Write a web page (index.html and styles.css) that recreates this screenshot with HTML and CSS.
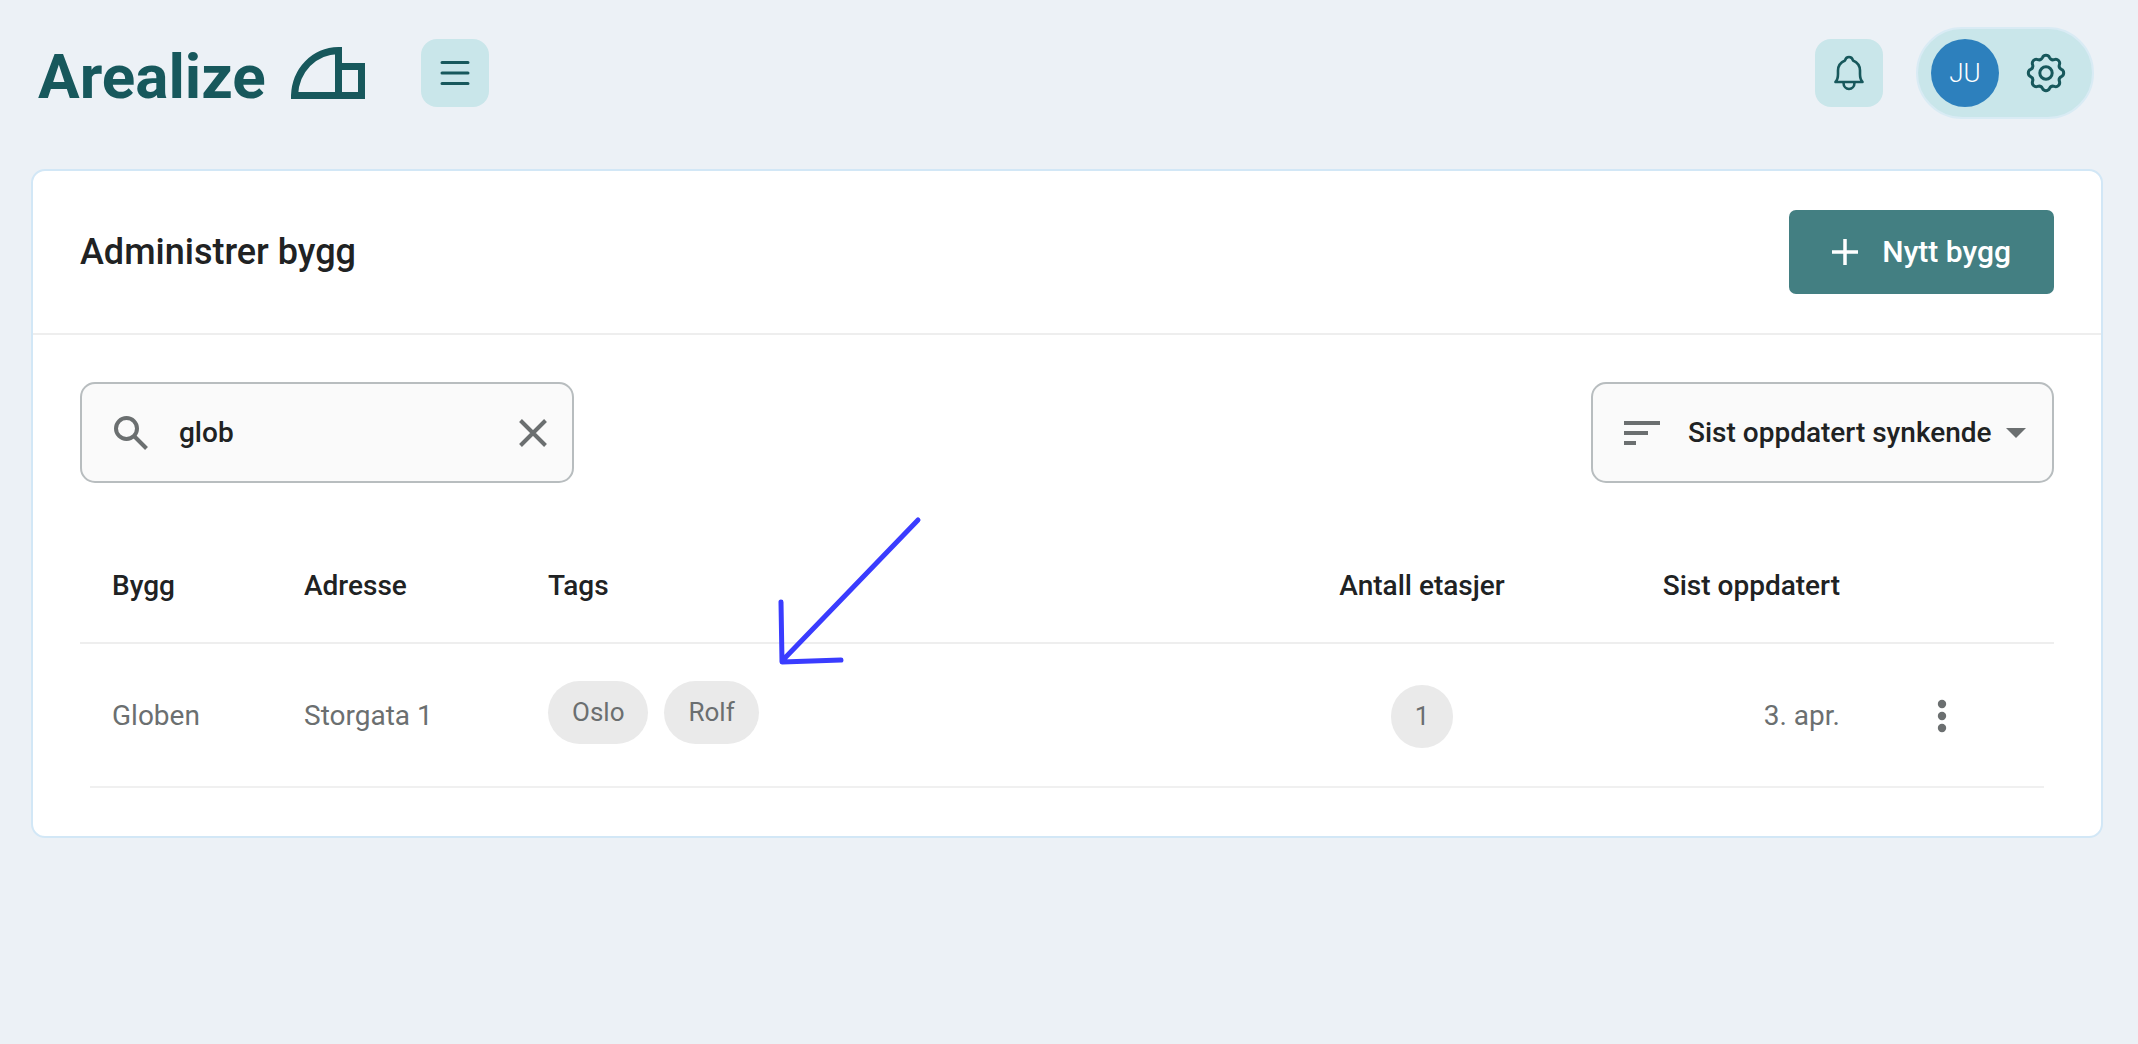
FILE: index.html
```html
<!DOCTYPE html>
<html lang="no">
<head>
  <meta charset="utf-8">
  <meta name="viewport" content="width=device-width, initial-scale=1">
  <title>Administrer bygg – Arealize</title>
  <link rel="stylesheet" href="styles.css">
</head>
<body>
  <header class="topbar">
    <a class="logo" href="#">
      <span class="logo-text">Arealize</span>
      <svg class="logo-mark" width="74" height="52" viewBox="0 0 74 52" fill="none" stroke="currentColor" stroke-width="7" aria-hidden="true">
        <path d="M3.5 48.5H70.500V19.500H47.500M47.500 48.500V3.500C23 4 4.500 23 3.500 48.500Z"/>
      </svg>
    </a>
    <button class="square-button" type="button" aria-label="Meny">
      <svg width="30" height="26" viewBox="0 0 30 26" fill="none" stroke="currentColor" stroke-width="3" stroke-linecap="round" aria-hidden="true">
        <path d="M2 2.500H28M2 13H28M2 23.500H28"/>
      </svg>
    </button>
    <div class="topbar-actions">
      <button class="square-button" type="button" aria-label="Varsler">
        <svg width="30" height="36" viewBox="0 0 30 36" fill="none" stroke="currentColor" stroke-width="2.600" stroke-linejoin="round" aria-hidden="true">
          <path d="M1.500 27H28.500C26.500 25 26 22.500 26 19V15.500C26 11 23.500 7.500 19 5.500C18.500 3.500 17 2 15 2S11.500 3.500 11 5.500C6.500 7.500 4 11 4 15.500V19C4 22.500 3.500 25 1.500 27Z"/>
          <path d="M9.500 27.500C9.500 31.500 12 34 15 34S20.500 31.500 20.500 27.500"/>
        </svg>
      </button>
      <div class="account">
        <button class="avatar" type="button">JU</button>
        <button class="settings" type="button" aria-label="Innstillinger">
          <svg width="40" height="40" viewBox="-20 -20 40 40" fill="none" stroke="currentColor" stroke-width="3" stroke-linejoin="round" aria-hidden="true">
            <path d="M15.400-3.550A3.900 3.900 0 0 1 15.400 3.550A4 4 0 0 0 13.400 8.370A3.900 3.900 0 0 1 8.370 13.400A4 4 0 0 0 3.550 15.400A3.900 3.900 0 0 1-3.550 15.400A4 4 0 0 0-8.370 13.400A3.900 3.900 0 0 1-13.400 8.370A4 4 0 0 0-15.400 3.550A3.900 3.900 0 0 1-15.400-3.550A4 4 0 0 0-13.400-8.370A3.900 3.900 0 0 1-8.370-13.400A4 4 0 0 0-3.550-15.400A3.900 3.900 0 0 1 3.550-15.400A4 4 0 0 0 8.370-13.400A3.900 3.900 0 0 1 13.400-8.370A4 4 0 0 0 15.400-3.550Z"/>
            <circle r="6.200"/>
          </svg>
        </button>
      </div>
    </div>
  </header>

  <main class="card">
    <div class="card-header">
      <h1 class="title">Administrer bygg</h1>
      <button class="primary-button" type="button">
        <svg width="26" height="26" viewBox="0 0 26 26" fill="none" stroke="currentColor" stroke-width="3.500" aria-hidden="true">
          <path d="M0 13H26M13 0V26"/>
        </svg>
        Nytt bygg
      </button>
    </div>

    <div class="card-body">
      <div class="filters">
        <div class="field search">
          <svg width="34" height="34" viewBox="0 0 34 34" fill="none" stroke="currentColor" stroke-width="4" aria-hidden="true">
            <circle cx="12.500" cy="12.500" r="10.500"/>
            <path d="M20.500 20.500L32.500 32.500"/>
          </svg>
          <input class="search-input" type="text" value="glob" aria-label="Søk">
          <button class="clear" type="button" aria-label="Tøm søk">
            <svg width="28" height="28" viewBox="0 0 28 28" fill="none" stroke="currentColor" stroke-width="4" aria-hidden="true">
              <path d="M1.500 1.500L26.500 26.500M26.500 1.500L1.500 26.500"/>
            </svg>
          </button>
        </div>
        <div class="field sort">
          <svg width="36" height="24" viewBox="0 0 36 24" fill="currentColor" aria-hidden="true">
            <path d="M0 0H36V4H0ZM0 10H24V14H0ZM0 20H12V24H0Z"/>
          </svg>
          <select class="sort-select" aria-label="Sortering">
            <option>Sist oppdatert synkende</option>
          </select>
          <svg width="20" height="10" viewBox="0 0 20 10" fill="currentColor" aria-hidden="true">
            <path d="M0 0H20L10 10Z"/>
          </svg>
        </div>
      </div>

      <div class="table-area">
        <table class="buildings">
          <colgroup>
            <col class="col-name">
            <col class="col-address">
            <col>
            <col class="col-floors">
            <col class="col-updated">
            <col class="col-menu">
          </colgroup>
          <thead>
            <tr>
              <th scope="col">Bygg</th>
              <th scope="col">Adresse</th>
              <th scope="col">Tags</th>
              <th scope="col" class="center">Antall etasjer</th>
              <th scope="col" class="right">Sist oppdatert</th>
              <td></td>
            </tr>
          </thead>
          <tbody>
            <tr>
              <td>Globen</td>
              <td>Storgata 1</td>
              <td>
                <div class="tags">
                  <span class="chip">Oslo</span>
                  <span class="chip">Rolf</span>
                </div>
              </td>
              <td class="center"><span class="chip">1</span></td>
              <td class="right">3. apr.</td>
              <td>
                <button class="row-menu" type="button" aria-label="Flere valg">
                  <svg width="10" height="34" viewBox="0 0 10 34" fill="currentColor" aria-hidden="true">
                    <circle cx="5" cy="5" r="4.200"/>
                    <circle cx="5" cy="17" r="4.200"/>
                    <circle cx="5" cy="29" r="4.200"/>
                  </svg>
                </button>
              </td>
            </tr>
          </tbody>
        </table>
        <!-- Annotation arrow pointing at the tags -->
        <svg class="arrow" width="146" height="150" viewBox="0 0 146 150" fill="none" stroke="currentColor" stroke-width="5" stroke-linecap="round" stroke-linejoin="round" aria-hidden="true">
          <path d="M142 4L6 145M5 86L6 146L65 144"/>
        </svg>
      </div>
    </div>
  </main>
</body>
</html>
```

FILE: styles.css
```css
* {
  box-sizing: border-box;
}

body {
  margin: 0;
  background: #ecf1f6;
  color: #202223;
  font-family: Roboto, "Liberation Sans", sans-serif;
  font-size: 28px;
  line-height: 40px;
}

svg {
  display: block;
  flex: none;
}

button,
input,
select {
  margin: 0;
  padding: 0;
  border: 0;
  background: none;
  color: inherit;
  font: inherit;
}

button {
  display: flex;
  align-items: center;
  justify-content: center;
  flex: none;
  cursor: pointer;
}

.topbar {
  display: flex;
  align-items: center;
  padding: 27px 44px 50px 38px;
  color: #17585c;
}

.logo {
  display: flex;
  align-items: center;
  gap: 25px;
  margin-right: 56px;
  color: inherit;
  text-decoration: none;
}

.logo-text {
  padding-top: 8px;
  font-size: 62px;
  font-weight: 700;
  line-height: 84px;
}

.square-button {
  width: 68px;
  height: 68px;
  border-radius: 16px;
  background: #c9e6ea;
}

.topbar-actions {
  display: flex;
  align-items: center;
  gap: 33px;
  margin-left: auto;
}

.account {
  display: flex;
  align-items: center;
  gap: 13px;
  padding: 10px 12px 10px 13px;
  border: 2px solid #d9ebf4;
  border-radius: 46px;
  background: #c9e6ea;
}

.avatar,
.settings {
  width: 68px;
  height: 68px;
  border-radius: 50%;
}

.avatar {
  background: #2d80bd;
  color: #fff;
  font-size: 26px;
  font-weight: 300;
}

.card {
  margin: 0 35px 40px 31px;
  border: 2px solid #d2e7f6;
  border-radius: 14px;
  background: #fff;
}

.card-header {
  display: flex;
  align-items: center;
  justify-content: space-between;
  padding: 39px 47px;
  border-bottom: 2px solid #eee;
}

.title {
  margin: 0;
  font-size: 36px;
  font-weight: 500;
  line-height: 40px;
}

.primary-button {
  gap: 24px;
  height: 84px;
  padding: 0 43px;
  border-radius: 7px;
  background: #437f82;
  color: #fff;
  font-size: 30px;
  font-weight: 500;
}

.card-body {
  padding: 47px 47px 48px;
}

.filters {
  display: flex;
  justify-content: space-between;
}

.field {
  display: flex;
  align-items: center;
  height: 101px;
  border: 2px solid #b8bdbf;
  border-radius: 15px;
  background: #fafafa;
  color: #6b6f70;
}

.search {
  gap: 31px;
  width: 494px;
  padding: 0 25px 0 32px;
}

.search-input,
.sort-select {
  flex: 1;
  min-width: 0;
  height: 60px;
  color: #202223;
  font-weight: 500;
  appearance: none;
}

.sort {
  gap: 28px;
  padding: 0 26px 0 31px;
}

.sort-select + svg {
  margin-left: -14px;
}

.table-area {
  position: relative;
  margin-top: 46px;
}

.buildings {
  width: 100%;
  table-layout: fixed;
  border-collapse: collapse;
}

.buildings th,
.buildings td {
  padding: 0 32px;
  text-align: left;
  white-space: nowrap;
}

.buildings th {
  font-weight: 500;
}

.buildings .center {
  text-align: center;
}

.buildings .right {
  text-align: right;
}

.buildings thead tr {
  height: 114px;
  border-bottom: 2px solid #eee;
}

.buildings tbody tr {
  height: 145px;
  background: linear-gradient(#f0f0f0, #f0f0f0) bottom center / calc(100% - 20px) 2px no-repeat;
  color: #6b6f70;
}

.col-name {
  width: 192px;
}

.col-address {
  width: 244px;
}

.col-floors {
  width: 228px;
}

.col-updated {
  width: 336px;
}

.col-menu {
  width: 182px;
}

.buildings th.center {
  padding: 0 24px;
}

.tags {
  display: flex;
  gap: 16px;
  margin-bottom: 8px;
}

.chip {
  display: inline-block;
  padding: 0 24px;
  border-radius: 32px;
  background: #eaeaea;
  font-size: 26px;
  line-height: 63px;
}

.row-menu {
  width: 76px;
  height: 76px;
}

.arrow {
  position: absolute;
  top: -13px;
  left: 696px;
  color: #3a3cff;
  pointer-events: none;
}
```
